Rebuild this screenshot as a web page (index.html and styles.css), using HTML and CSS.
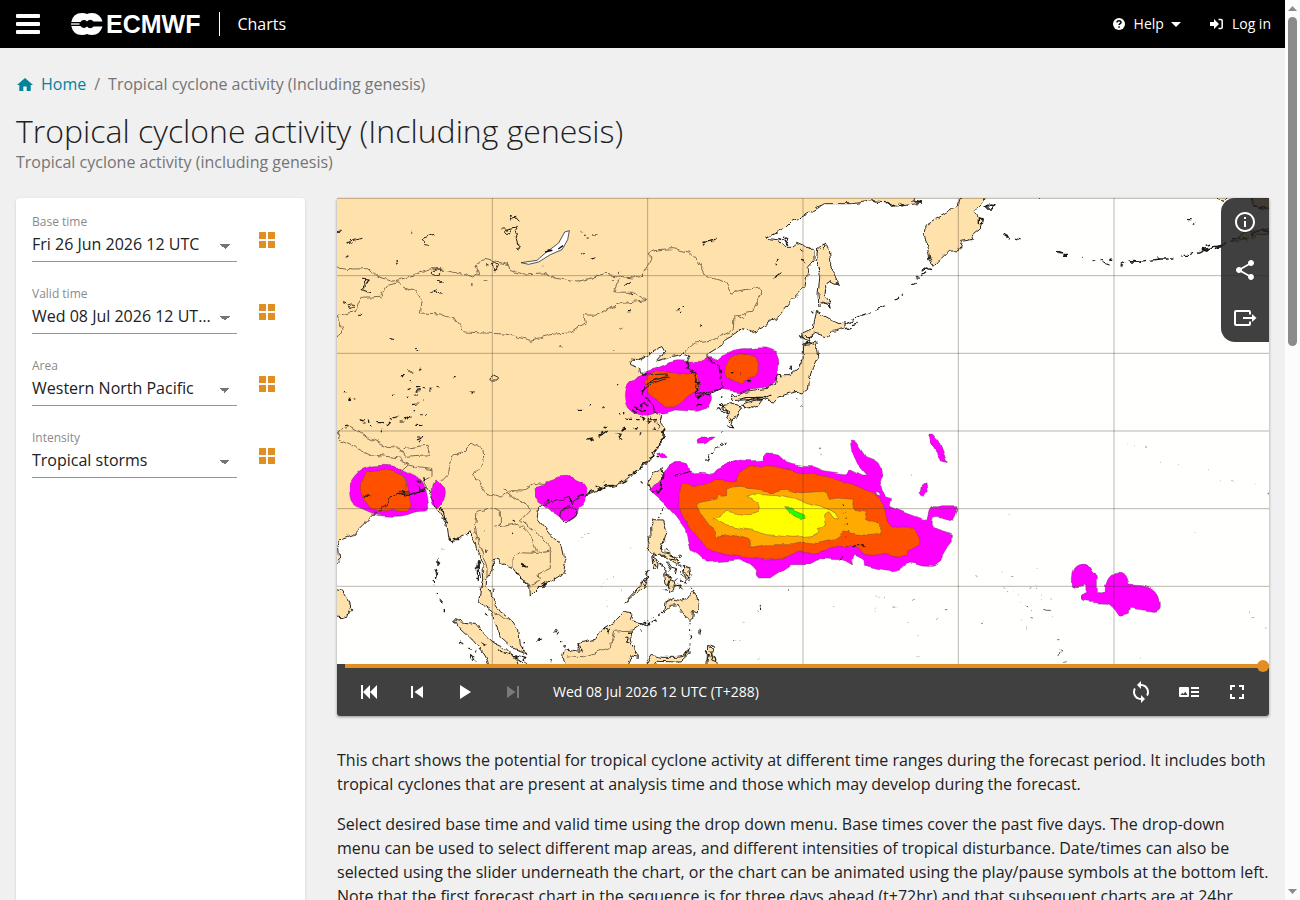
FILE: index.html
```html
<!DOCTYPE html>
<html lang="en">
  <head>
    <meta charset="UTF-8" />
    <meta name="viewport" content="width=device-width, initial-scale=1.0" />
    <title>Tropical cyclone activity (Including genesis) | ECMWF</title>
    <link rel="stylesheet" href="styles.css" />
  </head>
  <body>
    <div class="page">
      <header class="topbar">
        <button class="menu-button" aria-label="Menu"><span></span><span></span><span></span></button>
        <a class="logo" href="#">
          <svg width="32" height="24" viewBox="0 0 32 24" aria-hidden="true">
            <path d="M11 1Q14 1 16 2Q18 1 21 1Q29 1 31.500 9.500H22.500A4 4 0 0 0 16 9.500A4 4 0 0 0 9.500 10H.3Q2 1 11 1z" fill="#fff" />
            <path d="M11 23Q14 23 16 22Q18 23 21 23Q29 23 31.500 14.500H22.500A4 4 0 0 1 16 14.500A4 4 0 0 1 9.500 14H.3Q2 23 11 23z" fill="#fff" />
            <path d="M0 12h8.500" stroke="#fff" stroke-width="1.300" />
          </svg>
          <span>ECMWF</span>
        </a>
        <a class="app-name" href="#">Charts</a>
        <nav class="user-nav">
          <button class="nav-item">
            <svg width="12" height="12" viewBox="0 0 12 12" aria-hidden="true">
              <circle cx="6" cy="6" r="6" fill="#fff" />
              <path d="M4 4.600C4 2 8 2.100 8 4.400C8 5.600 6.100 5.700 6.100 7M6.100 8.200V9.700" fill="none" stroke="#000" stroke-width="1.500" />
            </svg>
            Help
            <svg class="caret" width="10" height="5" viewBox="0 0 10 5" aria-hidden="true"><path d="M0 0h10L5 5z" fill="#fff" /></svg>
          </button>
          <a class="nav-item" href="#">
            <svg width="13" height="12" viewBox="0 0 13 12" aria-hidden="true">
              <path d="M0 4h4V1l5 5-5 5V8H0z" fill="#fff" />
              <path d="M8.500 1.500H11q1.200 0 1.200 1.200v6.600q0 1.200-1.200 1.200H8.500" fill="none" stroke="#fff" stroke-width="1.500" />
            </svg>
            Log in
          </a>
        </nav>
      </header>

      <main>
        <nav class="breadcrumb">
          <a href="#">
            <svg width="16" height="16" viewBox="0 0 16 16" aria-hidden="true"><path d="M8 2l8 7h-2.300v6H9.700v-4.500H6.300V15H2.300V9H0z" fill="#00839b" /></svg>
            Home
          </a>
          <span>/</span>
          <span>Tropical cyclone activity (Including genesis)</span>
        </nav>
        <h1>Tropical cyclone activity (Including genesis)</h1>
        <p class="subtitle">Tropical cyclone activity (including genesis)</p>

        <div class="columns">
          <aside class="filters">
            <div class="filter">
              <div class="field">
                <label for="base-time">Base time</label>
                <select id="base-time"><option>Fri 26 Jun 2026 12 UTC</option></select>
              </div>
              <button class="grid-button" aria-label="All base times"><span></span><span></span><span></span><span></span></button>
            </div>
            <div class="filter">
              <div class="field">
                <label for="valid-time">Valid time</label>
                <select id="valid-time"><option>Wed 08 Jul 2026 12 UTC (T+288)</option></select>
              </div>
              <button class="grid-button" aria-label="All valid times"><span></span><span></span><span></span><span></span></button>
            </div>
            <div class="filter">
              <div class="field">
                <label for="area">Area</label>
                <select id="area"><option>Western North Pacific</option></select>
              </div>
              <button class="grid-button" aria-label="All areas"><span></span><span></span><span></span><span></span></button>
            </div>
            <div class="filter">
              <div class="field">
                <label for="intensity">Intensity</label>
                <select id="intensity"><option>Tropical storms</option></select>
              </div>
              <button class="grid-button" aria-label="All intensities"><span></span><span></span><span></span><span></span></button>
            </div>
          </aside>

          <section class="content">
            <div class="chart">
              <svg class="map" viewBox="0 0 2796 1398" role="img" aria-label="Map of tropical cyclone activity">
                <defs>
                  <filter id="rough" x="0" y="0" width="2796" height="1398" filterUnits="userSpaceOnUse" color-interpolation-filters="sRGB">
                    <feTurbulence type="fractalNoise" baseFrequency="0.045" numOctaves="2" seed="4" />
                    <feDisplacementMap in="SourceGraphic" scale="18" xChannelSelector="R" yChannelSelector="G" />
                  </filter>
                  <filter id="wave" x="0" y="0" width="2796" height="1398" filterUnits="userSpaceOnUse" color-interpolation-filters="sRGB">
                    <feTurbulence type="fractalNoise" baseFrequency="0.022" numOctaves="1" seed="9" />
                    <feDisplacementMap in="SourceGraphic" scale="20" xChannelSelector="R" yChannelSelector="G" />
                  </filter>
                  <g id="land">
                    <!-- Asia -->
                    <path d="M-29-29H1749L1730 8L1754 15L1709 22L1659 25L1654 12L1609 8L1549 17L1459 17L1409 48L1364 70L1339 95L1289 120L1325 126L1339 145L1364 145L1379 133L1419 150L1431 160L1431 185L1414 205L1409 235L1404 265L1369 300L1329 350L1279 388L1244 402L1214 392L1194 405L1159 428L1157 440L1109 470L1112 487L1140 498L1149 520L1155 550L1152 572L1119 580L1079 598L1074 580L1089 560L1074 540L1079 525L1049 510L1054 485L1059 475L1034 468L989 480L959 490L984 462L974 445L949 455L935 470L905 488L880 486L875 500L908 510L910 528L935 530L989 528L994 540L949 555L919 575L915 590L944 610L949 640L974 655L969 672L984 690L975 720L965 750L940 790L915 802L880 841L840 861L780 876L760 886L715 901L705 921L695 896L640 911L605 931L600 961L640 1011L675 1041L685 1096L680 1126L640 1151L610 1166L580 1196L578 1161L545 1136L525 1111L490 1096L485 1084L468 1088L465 1116L450 1136L447 1166L465 1186L470 1211L490 1241L520 1261L545 1296L550 1341L567 1366L530 1351L490 1316L475 1276L465 1241L425 1211L430 1176L440 1146L438 1106L425 1066L410 1026L398 996L385 1011L350 1028L335 1021L330 976L300 931L282 896L268 868L230 884L185 886L160 901L150 921L120 941L90 971L50 1011L10 1026L2 1046L6 1095L-29 1110Z" />
                    <!-- Sri Lanka -->
                    <path d="M-29 1174L15 1177L35 1206L44 1234L36 1252L15 1259L-29 1255Z" />
                    <!-- Sumatra -->
                    <path d="M352 1265L380 1273L415 1276L440 1306L470 1334L505 1350L540 1384L548 1430H470L445 1374L405 1324L370 1291Z" />
                    <!-- Borneo -->
                    <path d="M700 1430L675 1376L685 1352L725 1360L732 1334L775 1324L795 1294L830 1274L862 1240L885 1246L880 1267L914 1275L880 1300L885 1336L905 1378L885 1374L865 1430Z" />
                    <!-- Sulawesi -->
                    <path d="M930 1398L945 1372L975 1378L1020 1378L1040 1374L1055 1350L1057 1366L1029 1392L960 1390L945 1420Z" />
                    <path d="M1112 1345L1109 1420L1138 1398L1134 1376L1122 1378L1128 1350Z" />
                    <!-- Taiwan, Hainan -->
                    <path d="M975 810L978 830L968 870L955 878L946 884L935 856L946 825Z" />
                    <path d="M668 955L672 935L700 928L721 932L712 960L690 974Z" />
                    <!-- Luzon -->
                    <path d="M950 965L980 966L990 1004L978 1028L972 1052L980 1064L1005 1070L1029 1096L1010 1094L982 1072L960 1072L940 1060L930 1026L942 1012L941 985Z" />
                    <path d="M944 1078L966 1092L964 1112L950 1110ZM980 1130L1002 1136L990 1160L984 1155ZM1039 1104L1058 1110L1062 1134L1050 1148L1042 1132ZM995 1145L1012 1150L1014 1170L1000 1188L990 1172Z" />
                    <!-- Palawan -->
                    <path d="M862 1214L875 1200L912 1160L932 1134L920 1166L880 1200Z" />
                    <!-- Mindanao -->
                    <path d="M979 1240L985 1212L1010 1198L1019 1208L1030 1210L1055 1198L1070 1176L1084 1226L1080 1246L1066 1240L1064 1264L1054 1262L1030 1242L1024 1220L1000 1222Z" />
                    <!-- Hokkaido, Honshu, Kyushu, Shikoku -->
                    <path d="M1439 340L1479 363L1509 377L1524 368L1524 390L1488 400L1474 418L1434 405L1414 418L1419 430L1401 425L1397 405L1429 390L1432 370Z" />
                    <path d="M1400 442L1419 440L1436 435L1442 455L1445 475L1430 505L1418 540L1414 575L1395 588L1374 580L1344 590L1325 598L1308 616L1294 600L1269 607L1239 605L1184 608L1184 600L1220 580L1299 570L1315 560L1319 535L1329 530L1359 530L1384 510L1398 482Z" />
                    <path d="M1155 620L1179 614L1204 622L1211 635L1198 658L1184 674L1169 660L1179 640L1159 635ZM1218 618L1259 605L1276 605L1264 622L1239 630L1224 635Z" />
                    <!-- Sakhalin -->
                    <path d="M1442 152L1459 138L1465 135L1474 155L1479 195L1494 230L1508 262L1479 248L1463 270L1461 290L1474 308L1480 318L1459 312L1446 326L1443 290L1449 230L1438 192Z" />
                    <!-- Kamchatka -->
                    <path d="M1949-29L1942 5L1912 40L1925 60L1940 62L1930 90L1906 110L1910 124L1874 130L1864 158L1834 160L1804 190L1788 208L1779 185L1762 110L1764 85L1794 65L1829 45L1864 22L1879-29Z" />
                    <!-- Alaska -->
                    <path d="M2638-29L2642 5L2664 10L2700-29ZM2740-29L2750 20L2780 34L2820 20V-29ZM2680 130L2710 112L2750 100L2820 88V104L2760 112L2715 128Z" />
                  </g>
                </defs>

                <rect width="2796" height="1398" fill="#fffffe" />
                <g filter="url(#rough)">
                  <use href="#land" fill="#ffe2ab" />
                </g>
                <!-- Lake Baikal -->
                <path d="M552 194L600 187L625 165L665 135L683 102L697 98L692 125L675 155L640 170L605 192L575 199Z" fill="#fff" stroke="#30343a" stroke-width="2.500" />
                <path d="M624 162l22-5l-14-1M664 153l14-10" stroke="#111" stroke-width="4" fill="none" />

                <!-- probability areas -->
                <g class="areas" filter="url(#wave)">
                  <path class="p5" d="M865 592Q868 550 895 547Q915 524 940 518L980 502Q1000 488 1024 488L1070 490L1104 490Q1114 474 1124 476L1139 484Q1156 466 1174 464Q1200 450 1234 452Q1270 448 1289 450L1312 458Q1322 460 1318 464Q1328 480 1325 500L1324 532Q1320 550 1304 560Q1294 566 1284 568L1239 573Q1220 584 1209 582L1150 574L1120 585Q1126 600 1122 608Q1110 636 1104 632Q1080 642 1069 640L1014 636Q980 648 959 645Q940 656 925 655Q900 650 890 640Q868 630 865 592Z" />
                  <path class="p20" d="M928 570Q918 550 925 548Q930 530 945 528Q960 520 990 522L1049 528Q1070 524 1078 528Q1086 540 1086 560Q1084 575 1074 582L1049 600Q1040 612 1034 615Q1015 628 1004 627Q990 628 979 622L949 598Q930 590 928 570Z" />
                  <path class="p20" d="M1164 505Q1164 490 1176 485Q1190 472 1214 471Q1230 466 1250 474Q1264 476 1264 490V520Q1262 535 1249 540Q1235 542 1209 555Q1190 552 1184 545Q1166 540 1164 505Z" />
                  <path class="p5" d="M38 881Q36 855 45 846Q60 820 80 812Q110 800 138 802Q165 800 190 812L245 838Q258 845 262 860Q275 900 275 930Q275 940 262 940Q245 938 225 944Q200 955 180 955Q145 955 120 952L75 932Q50 925 48 916Q38 905 38 881ZM283 900Q280 860 293 846Q300 848 312 858Q325 868 325 885Q325 905 317 910Q310 928 300 930Q284 920 283 900Z" />
                  <path class="p20" d="M70 881Q68 850 78 836Q84 822 92 820Q110 815 135 815Q160 815 185 828Q208 836 210 850Q215 880 220 906Q220 935 208 937Q190 940 170 932Q145 945 122 941Q95 930 90 916Q72 900 70 881Z" />
                  <path class="p5" d="M595 884Q592 870 600 868L625 862Q630 846 645 844Q665 832 690 835Q708 836 720 846Q745 855 750 868Q758 880 755 890Q754 905 745 915Q738 930 722 930Q722 945 712 955Q700 966 682 966Q665 960 655 950Q645 930 625 920Q595 915 595 884Z" />
                  <path class="p5" d="M1109 1093Q1080 1060 1059 1054Q1050 1030 1045 994L1019 958L979 914L937 878L970 840Q976 814 990 809Q1005 795 1024 796Q1046 796 1054 804Q1060 820 1069 824Q1100 820 1129 828Q1140 812 1149 811Q1180 792 1209 786Q1245 790 1279 786Q1282 766 1294 768Q1315 768 1325 772L1349 794Q1380 806 1429 806L1459 818L1529 828Q1532 816 1539 816L1577 834H1590L1562 801Q1545 770 1543 726Q1554 726 1559 732L1589 776Q1620 786 1627 796Q1640 816 1634 836Q1625 845 1629 858L1645 896L1664 902L1659 926L1704 944L1769 968L1776 940Q1780 928 1789 926L1864 926Q1856 955 1849 970Q1830 965 1809 960Q1784 955 1784 968Q1780 988 1789 990L1849 1008V1028Q1820 1060 1811 1088Q1790 1104 1779 1102Q1755 1104 1734 1094Q1715 1090 1709 1096Q1695 1118 1669 1118Q1620 1114 1579 1102Q1580 1080 1569 1078Q1552 1068 1549 1070Q1540 1084 1547 1100Q1530 1098 1519 1086L1449 1082Q1420 1102 1409 1100L1359 1100Q1330 1120 1299 1140H1264Q1250 1134 1256 1118Q1240 1094 1209 1086Z" />
                  <path class="p5" d="M1079 726L1094 714L1134 714L1109 734L1082 736ZM959 764L974 760L993 776L969 776ZM1775 708L1787 708L1807 732L1831 794L1812 788L1784 740ZM1752 892L1756 864L1770 854L1774 880L1762 898Z" />
                  <path class="p20" d="M1029 886Q1030 858 1044 856Q1055 856 1069 866Q1110 856 1139 844L1197 849Q1202 818 1214 816Q1240 802 1269 804Q1295 802 1319 806L1399 826L1449 832L1509 844L1554 862L1609 886Q1635 905 1644 934Q1652 980 1669 986Q1700 992 1729 990Q1750 1010 1748 1026Q1752 1040 1739 1048Q1720 1058 1709 1062Q1712 1075 1704 1076Q1675 1080 1654 1070Q1620 1072 1584 1066L1559 1046Q1530 1040 1509 1042Q1480 1055 1429 1066L1389 1062L1349 1078Q1320 1088 1289 1086L1209 1076Q1160 1070 1129 1060Q1100 1040 1084 1020Q1060 990 1054 980Q1030 950 1029 931Z" />
                  <path class="p40" d="M1079 926Q1080 914 1094 912L1137 904L1140 892L1150 898L1166 896V876Q1185 868 1209 868L1259 874L1309 882Q1330 872 1349 874L1389 884L1464 880L1474 904L1500 900L1549 904Q1545 925 1554 934L1584 940L1589 962Q1630 975 1634 984Q1636 1000 1629 1008Q1605 1014 1584 1012L1519 1002Q1500 1020 1484 1026L1439 1036L1399 1032L1369 1040L1289 1040L1239 1048Q1244 1025 1234 1018L1199 1008L1139 1018Q1138 994 1114 982Q1096 960 1079 926Z" />
                  <path class="p60" d="M1129 962L1149 960L1164 940L1229 950Q1260 948 1267 938L1264 920L1232 898L1259 886L1319 890L1369 900L1409 916L1449 926L1494 944L1507 966L1494 964L1479 944Q1464 950 1464 958L1469 982L1444 988Q1450 1000 1434 1006Q1420 1016 1409 1014L1369 1018L1289 1010L1239 996L1164 982Z" />
                  <path class="p80" d="M1346 929L1364 930L1379 940L1402 948L1404 962L1387 961L1361 946Z" />
                  <path class="p5" d="M2203 1138Q2205 1105 2225 1100Q2255 1092 2263 1122Q2280 1122 2281 1135V1184H2304Q2304 1130 2344 1122Q2370 1120 2376 1161L2419 1163Q2465 1175 2467 1216Q2470 1242 2445 1240L2381 1231L2377 1246L2363 1250Q2354 1265 2344 1250Q2325 1220 2309 1216Q2260 1215 2240 1210Q2230 1204 2237 1194L2252 1186L2253 1164Q2210 1174 2203 1164Z" />
                  <path d="M1610 878l12 2l6 10l-14-4z" fill="#fff" />
                </g>

                <!-- coastlines and country borders -->
                <g filter="url(#rough)" fill="none">
                  <use href="#land" stroke="#2b2723" stroke-width="3" />
                  <g stroke="#7d6a4e" stroke-width="3">
                    <path d="M0 207L50 213L95 212L120 235L165 250L195 243L245 225L285 215L330 218L410 237L425 230L417 200L440 184L515 200L520 218L555 228L620 225L655 240L715 252L765 240L800 228L885 240L915 232L945 180L932 170L960 155L1009 152L1059 163L1084 190L1109 235L1164 252L1184 285L1269 270L1274 285L1244 340L1194 350L1192 395L1119 430L1074 435L1034 468" />
                    <path d="M850 236L830 282L890 283L930 308L850 317L775 352L740 350L745 375L700 405L650 408L580 427L505 408L382 402L355 365L310 348L250 345L255 310L235 280L200 268L180 254L150 262L130 295L72 298L55 342L0 352M0 418L15 395L0 352" />
                    <path d="M1200 352l14-8l14 8l-8 10z" />
                    <path d="M5 696L40 685L95 720L150 745L190 748L205 775L280 770L270 742L200 752M5 696L5 725L100 770L190 780L210 800L250 810L285 815L285 835L258 848L275 880M190 788L212 800L190 820L210 850L208 880M310 850L335 825L345 776L375 765L405 735L435 755L438 790L410 830L450 886L490 900L520 875L560 876L590 856L630 860M500 876L540 906L575 921L580 936L550 966L600 1006L640 1050L640 1060L600 1066L545 1064L525 1080L525 1111M465 930L420 940L415 990L430 1050L450 1110L450 1136M465 926L490 940L490 986L545 976L585 1016L598 1062M640 1062L640 1111L600 1130L605 1150L580 1160M470 1240L500 1264L520 1261M690 1374L740 1376L820 1348L830 1300L885 1296" />
                    <path d="M465 197l8-3l12 8l-8 16h-6zM458 540l12-9l15 8l-5 7h-17zM285 225l8-9h16l-2 13l-12 1zM34 318l8-2l8 10l-8 4z" stroke="#3a3020" />
                  </g>
                  <g stroke="#1c1a17" stroke-width="3.500">
                    <path d="M519 68l5-20l20 22M526 62l12-8M496 93h10l4 8l6-10l6 6l-8 14l-9-8M510 93l25-5l6 20l-4 10l5 20l2 20l-8-10l12-2M28 140l20-12l28-7M255 122l38-14M255 122l8 18l10 2M0 103h8M26 178l8-6M222 102h4M176 190l5 11M78 243l18 3l-10 16l-14 10l30 9M72 272l14-20l12-6M18 311l10 3M63 352h10M300 250l22 4l-12 3M280 284l16-12l4 8M306 276l10 12M158 418l14 4M235 450l8 12M402 261h5M440 249h8M448 200h6M614 205h4M728 97h2M738 109h8M752 120h6M768 111h14M733 172l14-7M758 185l14-6" stroke-width="3" />
                    <path d="M210 522h16M250 511h6M192 533h8M218 548l6 4M234 566h10M236 577l12-2M236 588h10M256 569h10M276 576h8M278 569l4 4M296 565l6 2M350 536h6M398 582h16l-4 5M22 581h8M34 604h8M52 600h6M168 592h4M205 592h8M212 574h6M260 608h2M226 620l16-2M230 641h4M68 662l14 4M80 672h6M94 665l2 12M96 688h4M24 683l12-2M124 677h14M146 682l12-12M162 660l5 5M172 660l12-4M200 660l14-4l-4 8M188 672h12M218 657h6M250 650h4M238 682h18M265 652h4M240 717h10M132 700l4-8M840 560h6M722 634h14M758 623h4M796 629h4M846 647h4M858 644h4M868 661h14M900 665h8M910 655l10 10M668 444h6M828 459h4M850 390h6M870 338h8M828 243h6M862 260l22-10M875 285l10 5M846 223h2" />
                    <path d="M1096 130l40-6M1100 135l14-8l15 4M1102 138l-4 4M1314 187l4-4M1316 198l4-2M1310 242l24-18M1022 335h4M1034 325h4M1028 346h4M1089 380l6 3M1324 118l14 5l12 12M1338 114l14 8l-4 10M1342 132l8 10M1390 154l6 2M1400 190l10 4M1392 184l12 3" />
                    <path d="M240 726l18-8M246 732l6-4M750 726l20-3l-8 6M780 716l18-10l14-10M786 708l12-8M838 704l14 2l-6 12l6 10M850 696l12-6M905 708h8M890 690l12 4M800 690l14-10M865 690l-8 8M890 627l20 8M880 634l14 8M892 640l10 4M776 864l12 6l-8 8M806 846l-2 8M184 886l30 6l30-12l20-6M190 880l16 4M230 880l-6 8M245 866v18M80 894h14M240 846l8 8M260 838l4 12M524 966l10 4M475 986h6M524 1008l4 2M440 998h2M444 1054v10M550 1096l14 8l8 6l-14-4z" stroke-width="4" />
                    <path d="M300 1084v20M294 1116l6 14M302 1126l-4 14M292 1146v6M305 1090l-3 10M290 1160v2M304 1182v4M314 1204v8M322 1230v10M318 1052v2M308 1206h4" stroke-width="4" />
                    <path d="M366 1332l16 6M394 1350l8 4M400 1370l12 6l4 12l-14-6zM412 1356l6 4M432 1334l14 8l-6 4M425 1086l3 14M420 1106l6 10M430 1120l3 20M418 1140l6 4M424 1090v60M470 1166l2 16M445 1246l10 6M480 1355l16 10M500 1364l20 6M524 1372l18 8l10-8l14 4l-8 10l14 8M560 1348v12M540 1384l16 10M650 1306l6-10l6 10l-6 6M598 1330l14-4M604 1326v6M560 1334h4M672 1334h4M676 1348l6-2M640 1388h4M690 1354l6-4M728 1336l8 24M800 1292l14 10l6-6M868 1316l8 6l-4 10l8 4M872 1300l10 4M610 1158l10-4l8 4l-12 12M600 1170l14-6l16-10M535 1120l6 14M548 1140l16 14M338 1018l14 14M350 1020l10 6M318 940l6 24M310 930l8 12" />
                    <path d="M915 1278l10-6M928 1282l12-10M944 1272l16-8M930 1268l8 4M908 1296h4M930 1120l4 8M926 1130l8-14M914 850l6 6M975 826l-2 40l-14 18M962 774l4 3" />
                    <!-- skerries along the Chinese coast -->
                    <path d="M984 690l-8 14l6 10l-12 8l2 16l-14 8M958 754l-10 10l2 10l-14 10M932 790l-14 6l4 10l-14 4M900 814l-12 10l4 6l-16 6M868 846l-16 2l-6 8M826 862l-18 2l-8 8M796 866l-14 12M772 878l-14 2l-6 8M738 890l-14 2M700 904l6 16M640 906l-16 6" stroke-width="4" />
                  </g>
                  <!-- islands around Korea and Japan -->
                  <g stroke="#1c1a17" stroke-width="3.500" transform="translate(909 0)">
                    <path d="M165 545l14 8l-12 8l8 14l-10 10M170 590l20-4l20 4l28-16M175 600l18-8M166 624l10-5l10 2M135 495l12 6l-8 10M150 520l14 6M20 560l24-14l36-10M5 580l10-14M235 512l10 4l-8 8zM275 524h5M298 528h4M325 556l8-6M242 600l8-8M228 636l12-4l8 10M240 622l16 6M250 640l20 10M256 632l8 12M270 660l8 8M300 604l20-6l50 0l24-10M320 610l20-10l30 4M262 686l18 4M272 676l8 14M302 618l10 10M418 528l6 10M448 512l6-4v8M490 440l12-6l20 8M495 432l16 6M480 415l8 8M498 412l10 8l10-8M514 340l6 6M545 310l10 8l18 8l-4-14M590 252l8 10M615 380l14-8M622 376l16-10M645 362l16-8M664 352l28-8M618 392l14-4M636 380l14-4M710 335l24-12M764 306l10-6M780 294l8-6M815 262l12-6M828 244l8-8M845 220l14-10l14 5M846 230l14-10M700 8l14 6M735 10l20 12l10-4M750 20l40 4M775 15l20 6M825 8l16 8M545 138l10 6l-4 8M476 585l4 4M470 600l3 3M486 625v3M0 625l12-8l14 8M0 638l18-4M20 664l14 4l-10 8M30 660l16 4l-2 10M40 692l18 4M50 680l10 8M68 700l8-6" />
                  </g>
                  <!-- Aleutians -->
                  <g stroke="#1c1a17" stroke-width="4" transform="translate(1869 0)">
                    <path d="M78 30l12-12l14 2l-12 10zM130 108l20 12M132 112l10 6M168 120l14 6M288 162l18 6l-14-1M304 175h14M322 170h2M366 178h2M398 188l8-3M422 186l8 3M428 193l20 8M448 188l6-2M482 202l10-8M502 188l12 4l20 1l24-6M506 192l20-2l20 4M568 187l30-4h28M590 178l10 6M630 180h10M664 174h4M674 172h10M690 170l12-4M714 166l12-6M722 156l30-6l46-16M734 158l20-8M762 144l18-4l-12 12l30-14M740 142l12-4M684 65h8M698 78h8M812 126l30-8M850 120l14 10M870 110l30-12l24 4M900 96l24 4M880 24l40 6M55 60l14 6l-2 12l-12-2zM230 0h8" />
                  </g>
                  <!-- Philippines -->
                  <g stroke="#1c1a17" stroke-width="3" transform="translate(909 696)">
                    <path d="M60 248h4M54 258l6 4M66 240l4-6M38 372l14 8M62 352l6 10M74 358l14 8M92 370l18 12M88 384l20 4M76 394l10 8M60 400l12 8l8 20M70 420l10 14M84 404l10 14l-6 10M96 412l14 4l-4 16M112 402l10 10M116 374l8 6l-8 6zM126 408l14 20l8 24M118 424l14 20l10 18M120 450l16 10M112 462l12 4l-6 10M100 468l20 2l8 8M92 480l-8-10l4-14M82 440l16 2M134 440l6-4M104 450l8-8M70 476l10 10M150 470l8 10M156 484l14 10M40 390l10 20M36 378l8 6M0 460l18-14M8 450l12-14M20 436v-12M10 580l14 8M20 585l10-6M34 564l8-4M44 572l8 2M54 558l10-6l6-8M22 574l8 10M0 578h8M150 570v6M150 582v4M152 600v6M150 615l3 10M150 640v4M149 650v4M180 596v18M183 600l-3 8M210 650l8-6l8 6l-8 6M196 660l14 20M200 690l8-18M210 664l8 12l-6 14l16 6M224 680l4 10M144 662l-10 18M362 524l-4 10M354 542l4-4M443 480h4M283 631h6M110 134l22-4l20-8M104 136l10-2M200 90l10-14M206 86l6-12M216 68l8-4M224 58l8-6M236 44l10-2M244 38l4 4M252 40h4M196 86h4M248 6h4M540 56v4M541 70v6M608 224v4M612 244v2M618 262v4M622 280v4M624 300v4M620 320v2M622 350l-6 6M606 376l-6 14M640 347h34" />
                    <path d="M579 531h4M704 531h2M716 502h2M733 502h2M758 531h8M820 511h4M806 578h2M888 568h2M910 542h6M833 614h2M833 680h2M814 135h2M356 685h2M296 632h2M308 577h2M710 498h2M705 543h2" stroke-opacity="0.600" />
                  </g>
                  <!-- Micronesia -->
                  <g stroke="#1c1a17" stroke-width="3" stroke-opacity="0.700" transform="translate(1869 696)">
                    <path d="M922 192l6-4M780 147l4 2M556 54h4M64 577h4M124 430h3M153 441h4M250 535l10 3h10M220 564l-4 4M196 528l6 3M292 629h6M296 658l6 2M300 668l-4 12M305 660l-3 6M308 694l12-2M878 565h3M226 478h2" />
                    <path d="M502 42h2M522 44h2M600 94h2M651 101h2M741 119h2M817 154h2M884 165h2M149 253h3M203 361h3M704 311h2M48 432v4M231 415v2M132 472v4M138 488h3M160 482h3M174 494h2M210 472h2M224 468h2M246 492h2M244 512l4 2M182 518l4 2M210 545h3M184 572h2M198 594h3M274 560h2M270 510h2M870 549h3M917 591h3M541 684h2" stroke-opacity="0.400" />
                  </g>
                  <path d="M730 1018h4M740 1008h6M754 1004h6M726 1028h3M800 1156h4M806 1142h2M830 1138h3M808 1206h3M850 1174h2M880 1046h2M790 1170h2M806 1226h2" stroke="#777" stroke-width="2" />
                </g>

                <path class="graticule" d="M466 0V1398M932 0V1398M1398 0V1398M1864 0V1398M2331 0V1398M0 1H2796M0 233H2796M0 466H2796M0 699H2796M0 932H2796M0 1165H2796" />
              </svg>

              <div class="map-tools">
                <button aria-label="Information">
                  <svg width="24" height="24" viewBox="0 0 24 24"><path d="M11 7h2v2h-2zm0 4h2v6h-2zm1-9C6.480 2 2 6.480 2 12s4.480 10 10 10 10-4.480 10-10S17.520 2 12 2zm0 18c-4.410 0-8-3.590-8-8s3.590-8 8-8 8 3.590 8 8-3.590 8-8 8z" /></svg>
                </button>
                <button aria-label="Share">
                  <svg width="24" height="24" viewBox="0 0 24 24"><path d="M18 16.080c-.76 0-1.440.3-1.960.77L8.910 12.700c.05-.23.09-.46.09-.7s-.04-.47-.09-.7l7.050-4.110c.54.5 1.250.81 2.040.81 1.660 0 3-1.340 3-3s-1.340-3-3-3-3 1.340-3 3c0 .24.04.47.09.7L8.040 9.810C7.500 9.310 6.790 9 6 9c-1.660 0-3 1.340-3 3s1.340 3 3 3c.79 0 1.500-.31 2.040-.81l7.120 4.160c-.05.21-.08.43-.08.65 0 1.610 1.310 2.920 2.920 2.920s2.920-1.310 2.920-2.920-1.310-2.920-2.920-2.920z" /></svg>
                </button>
                <button aria-label="Export">
                  <svg width="24" height="24" viewBox="0 0 24 24"><path d="M17 8.500V6q0-1-1-1H3Q2 5 2 6v12q0 1 1 1h13q1 0 1-1v-2.500M10 12h10" fill="none" stroke="#fff" stroke-width="2" /><path d="M19 8l4.500 4L19 16z" /></svg>
                </button>
              </div>

              <div class="player">
                <input class="timeline" type="range" min="0" max="9" value="9" aria-label="Forecast step" />
                <div class="controls">
                  <button aria-label="First"><svg width="24" height="24" viewBox="0 0 24 24"><path d="M4 5h2v14H4zM13 5v14l-7-7zM20 5v14l-7-7z" /></svg></button>
                  <button aria-label="Previous"><svg width="24" height="24" viewBox="0 0 24 24"><path d="M6 6h2v12H6zm3.500 6l8.500 6V6z" /></svg></button>
                  <button aria-label="Play"><svg width="24" height="24" viewBox="0 0 24 24"><path d="M7 5v14l11-7z" /></svg></button>
                  <button aria-label="Next" disabled><svg width="24" height="24" viewBox="0 0 24 24"><path d="M6 18l8.500-6L6 6v12zM16 6v12h2V6h-2z" /></svg></button>
                  <span class="step">Wed 08 Jul 2026 12 UTC (T+288)</span>
                  <button aria-label="Loop"><svg width="24" height="24" viewBox="0 0 24 24"><path d="M12 4V1L8 5l4 4V6c3.310 0 6 2.690 6 6 0 1.010-.25 1.970-.7 2.800l1.460 1.460C19.540 15.030 20 13.570 20 12c0-4.420-3.580-8-8-8zm0 14c-3.310 0-6-2.690-6-6 0-1.010.25-1.970.7-2.800L5.240 7.740C4.460 8.970 4 10.430 4 12c0 4.420 3.580 8 8 8v3l4-4-4-4v3z" /></svg></button>
                  <button aria-label="Legend"><svg width="24" height="24" viewBox="0 0 24 24"><path fill-rule="evenodd" d="M3 7h8q1 0 1 1v8q0 1-1 1H3q-1 0-1-1V8q0-1 1-1zM3.500 15h7L8.300 11.800L6.500 14L5.300 12.700zM14 7h8v2h-8zM14 11h8v2h-8zM14 15h8v2h-8z" /></svg></button>
                  <button aria-label="Full screen"><svg width="24" height="24" viewBox="0 0 24 24"><path d="M7 14H5v5h5v-2H7v-3zm-2-4h2V7h3V5H5v5zm12 7h-3v2h5v-5h-2v3zM14 5v2h3v3h2V5h-5z" /></svg></button>
                </div>
              </div>
            </div>

            <div class="description">
              <p>This chart shows the potential for tropical cyclone activity at different time ranges during the forecast period. It includes both tropical cyclones that are present at analysis time and those which may develop during the forecast.</p>
              <p>Select desired base time and valid time using the drop down menu. Base times cover the past five days. The drop-down menu can be used to select different map areas, and different intensities of tropical disturbance. Date/times can also be selected using the slider underneath the chart, or the chart can be animated using the play/pause symbols at the bottom left. Note that the first forecast chart in the sequence is for three days ahead (t+72hr) and that subsequent charts are at 24hr</p>
            </div>
          </section>
        </div>
      </main>
    </div>

    <div class="scrollbar" aria-hidden="true">
      <svg width="9" height="5" viewBox="0 0 9 5"><path d="M0 5h9L4.500 0z" /></svg>
      <div class="scroll-track"><div class="scroll-thumb"></div></div>
      <svg width="9" height="5" viewBox="0 0 9 5"><path d="M0 0h9L4.500 5z" /></svg>
    </div>
  </body>
</html>
```

FILE: styles.css
```css
* {
  margin: 0;
  padding: 0;
  box-sizing: border-box;
}

body {
  display: flex;
  height: 100vh;
  overflow: hidden;
  font-family: "Open Sans", "Noto Sans", sans-serif;
  font-size: 16px;
  line-height: 24px;
  color: #212121;
  background-color: #f0f0f0;
}

a {
  color: inherit;
  text-decoration: none;
}

button {
  border: none;
  background: none;
  color: inherit;
  font: inherit;
  cursor: pointer;
}

.page {
  flex: 1;
  min-width: 0;
  display: flex;
  flex-direction: column;
  overflow: hidden;
}

/* header */
.topbar {
  display: flex;
  flex-shrink: 0;
  align-items: center;
  height: 48px;
  padding: 0 14px 0 16px;
  background-color: #000;
  color: #fff;
}

.menu-button {
  display: flex;
  flex-direction: column;
  gap: 4px;
  width: 24px;
}

.menu-button span {
  height: 4px;
  border-radius: 1px;
  background-color: #fff;
}

.logo {
  display: flex;
  align-items: center;
  gap: 3px;
  margin-left: 31px;
  padding-right: 19px;
  border-right: 1px solid #fff;
  font-family: "Liberation Sans", Arial, sans-serif;
  font-size: 25px;
  font-weight: bold;
}

.app-name {
  margin-left: 17px;
}

.user-nav {
  display: flex;
  gap: 29px;
  margin-left: auto;
  font-size: 14px;
}

.nav-item {
  display: flex;
  align-items: center;
  gap: 9px;
}

.caret {
  margin-left: -2px;
}

/* page heading */
main {
  display: flex;
  flex: 1;
  flex-direction: column;
  min-height: 0;
  padding: 24px 16px 0;
}

.breadcrumb {
  display: flex;
  gap: 8px;
  color: #757575;
}

.breadcrumb a {
  display: flex;
  align-items: center;
  gap: 8px;
  padding-left: 1px;
  color: #00839b;
}

h1 {
  margin-top: 16px;
  font-size: 32px;
  font-weight: 300;
  line-height: 38px;
}

.subtitle {
  color: #757575;
}

.columns {
  display: flex;
  flex: 1;
  gap: 32px;
  min-height: 0;
  margin-top: 24px;
}

/* filters */
.filters {
  width: 289px;
  flex-shrink: 0;
  padding: 12px 16px;
  border-radius: 4px 4px 0 0;
  background-color: #fff;
  box-shadow: 0 1px 3px rgba(0, 0, 0, 0.15);
}

.filter {
  display: flex;
  gap: 22px;
  height: 72px;
}

.field {
  width: 205px;
}

.field label {
  display: block;
  font-size: 12px;
  line-height: 24px;
  color: #8a8a8a;
}

.field select {
  display: block;
  width: 100%;
  height: 30px;
  margin-top: -2px;
  padding: 0 24px 5px 0;
  border: none;
  border-bottom: 1px solid #949494;
  border-radius: 0;
  appearance: none;
  background: linear-gradient(to bottom right, #757575 50%, transparent 50%) 193px 12px / 5px 5px no-repeat,
    linear-gradient(to bottom left, #757575 50%, transparent 50%) 188px 12px / 5px 5px no-repeat;
  color: #212121;
  font: inherit;
  text-overflow: ellipsis;
}

.grid-button {
  display: grid;
  grid-template-columns: 7px 7px;
  grid-template-rows: 7px 7px;
  gap: 2px;
  align-self: flex-start;
  margin-top: 22px;
}

.grid-button span {
  background-color: #e18e23;
}

/* chart */
.content {
  flex: 1;
  min-width: 0;
}

.chart {
  position: relative;
  border-radius: 2px;
  box-shadow: 0 1px 3px rgba(0, 0, 0, 0.4);
}

.map {
  display: block;
  width: 100%;
}

.areas path {
  stroke: #5a3a50;
  stroke-width: 2;
  stroke-opacity: 0.6;
}

.areas .p5 {
  fill: #f0f;
}

.areas .p20 {
  fill: #ff5000;
}

.areas .p40 {
  fill: #ffaa00;
}

.areas .p60 {
  fill: #ff0;
}

.areas .p80 {
  fill: #1eff00;
}

.graticule {
  fill: none;
  stroke: #3c3220;
  stroke-opacity: 0.35;
  stroke-width: 3;
}

.map-tools {
  position: absolute;
  top: 0;
  right: 0;
  display: flex;
  flex-direction: column;
  border-radius: 14px 0 0 14px;
  background-color: rgba(33, 33, 33, 0.86);
}

.map-tools button,
.controls button {
  display: flex;
  align-items: center;
  justify-content: center;
  width: 48px;
  height: 48px;
  fill: #fff;
}

.player {
  border-radius: 0 0 3px 3px;
  background-color: #404040;
  color: #fff;
}

.timeline {
  display: block;
  width: calc(100% - 8px);
  height: 4px;
  margin-left: 8px;
  appearance: none;
  background-color: #e18e23;
}

.timeline::-webkit-slider-thumb {
  width: 12px;
  height: 12px;
  border-radius: 50%;
  appearance: none;
  background-color: #e18e23;
}

.controls {
  display: flex;
  align-items: center;
  padding: 0 8px;
}

.controls button:disabled {
  opacity: 0.3;
}

.step {
  flex: 1;
  padding-left: 16px;
  font-size: 14px;
}

.description {
  padding-top: 32px;
}

.description p {
  margin-bottom: 16px;
}

/* scrollbar */
.scrollbar {
  display: flex;
  flex-direction: column;
  align-items: center;
  gap: 6px;
  width: 15px;
  padding: 6px 0;
  background-color: #fcfcfc;
  fill: #8b8b8b;
}

.scroll-track {
  flex: 1;
}

.scroll-thumb {
  width: 9px;
  height: 38%;
  border-radius: 5px;
  background-color: #8b8b8b;
}
```
